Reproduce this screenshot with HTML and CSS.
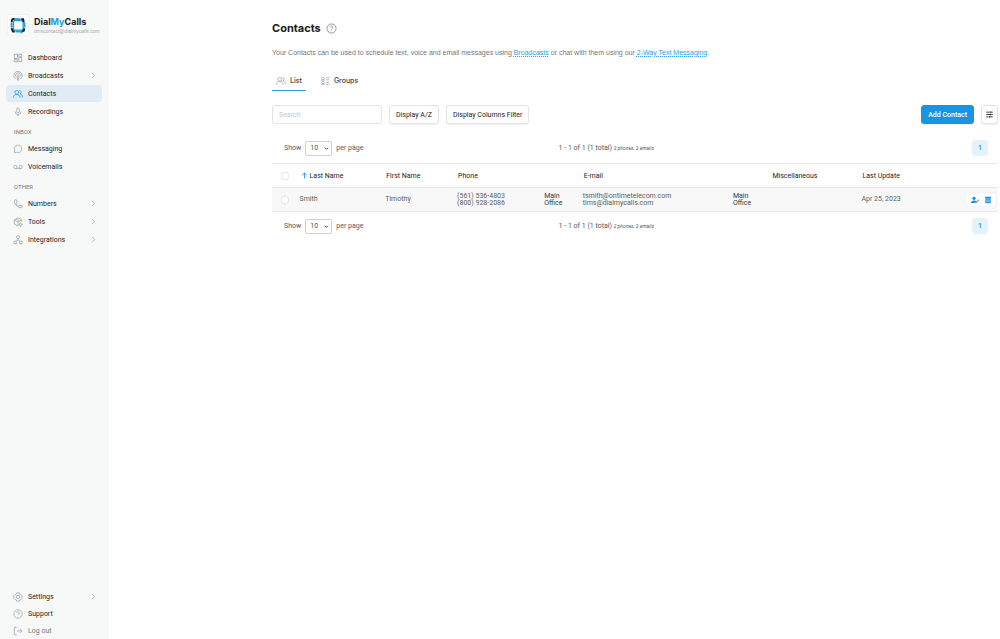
FILE: index.html
```html
<!DOCTYPE html>
<html lang="en">
<head>
<meta charset="utf-8">
<title>Contacts - DialMyCalls</title>
<link rel="stylesheet" href="styles.css">
</head>
<body>
<svg class="defs" aria-hidden="true">
  <symbol id="i-dash" viewBox="0 0 24 24"><rect x="3" y="3" width="8" height="10"/><rect x="3" y="16" width="8" height="5"/><rect x="14" y="11" width="7" height="10"/><rect x="14" y="3" width="7" height="5"/></symbol>
  <symbol id="i-cast" viewBox="0 0 24 24"><path d="M6 19a10 10 0 1 1 12 0M8 15a6 6 0 1 1 8 0"/><circle cx="12" cy="11" r="2"/><path d="M10 16h4l-1 6h-2z"/></symbol>
  <symbol id="i-users" viewBox="0 0 24 24"><circle cx="9" cy="8" r="4.500"/><path d="M1 21c0-5 3-8 8-8s8 3 8 8M15 3.500a4.500 4.500 0 0 1 2 8.500c3 1 5.500 3.500 6 8"/></symbol>
  <symbol id="i-mic" viewBox="0 0 24 24"><rect x="9" y="2" width="6" height="12" rx="3"/><path d="M5 11a7 7 0 0 0 14 0M12 18v4"/></symbol>
  <symbol id="i-chat" viewBox="0 0 24 24"><path d="M3 21l1-5a9 9 0 1 1 4 4z"/></symbol>
  <symbol id="i-vm" viewBox="0 0 24 24"><circle cx="5.500" cy="12" r="4"/><circle cx="18.500" cy="12" r="4"/><path d="M5.500 16h13"/></symbol>
  <symbol id="i-phone" viewBox="0 0 24 24"><path d="M3 4c0-1 1-2 2-2h3l2 6-3 2c1 3 4 6 7 7l2-3 6 2v3c0 1-1 2-2 2C11 21 3 13 3 4z"/></symbol>
  <symbol id="i-tools" viewBox="0 0 24 24"><path d="M21 11V7l-9-5-9 5v10l9 5M3 7l9 5 9-5M12 12v10M7 4.500l9 5"/><circle cx="18" cy="18" r="3"/><path d="M18 13v2M18 21v2M13 18h2M21 18h2"/></symbol>
  <symbol id="i-int" viewBox="0 0 24 24"><circle cx="12" cy="5" r="3.500"/><circle cx="5" cy="18" r="3.500"/><circle cx="19" cy="18" r="3.500"/><path d="M12 8v4M7 15l5-3 5 3"/></symbol>
  <symbol id="i-gear" viewBox="0 0 24 24"><path d="M9 2h6l1 3 3 1 3 3v6l-3 3-3 1-1 3H9l-1-3-3-1-3-3V9l3-3 3-1z"/><circle cx="12" cy="12" r="4"/></symbol>
  <symbol id="i-help" viewBox="0 0 24 24"><circle cx="12" cy="12" r="10"/><path d="M9 9.500a3 3 0 1 1 4.500 2.500c-1 .6-1.500 1-1.500 2M12 16.500v1"/></symbol>
  <symbol id="i-out" viewBox="0 0 24 24"><path d="M9 3H3v18h6M10 12h12M17 7l5 5-5 5"/></symbol>
  <symbol id="i-groups" viewBox="0 0 24 24"><circle cx="7" cy="6" r="3"/><circle cx="7" cy="16" r="3"/><path d="M2 11c1-2 9-2 10 0M2 21c1-2 9-2 10 0M15 4h7M15 9h7M15 15h7M15 20h7"/></symbol>
  <symbol id="i-chev" viewBox="0 0 24 24"><path d="M7 3l9 9-9 9"/></symbol>
  <symbol id="i-down" viewBox="0 0 24 24"><path d="M4 8l8 8 8-8"/></symbol>
  <symbol id="i-up" viewBox="0 0 24 24"><path d="M12 22V3M4 11l8-8 8 8"/></symbol>
</svg>
<div class="app">
  <aside class="sidebar">
    <div class="brand">
      <span class="logo"><svg viewBox="0 0 28 28"><g fill="none" stroke-width="3"><rect x="7" y="7" width="15" height="15" rx="2" stroke="#1c9be6" stroke-width="2"/><path d="M9 4L5 5 4 10M23 10l-1-5h-3M4 19l2 5 3 0M20 24l3-1 1-4" stroke="#17202a"/><path d="M9 5h9M4 11v7M24 10v8M10 24h9l1 3" stroke="#1c9be6"/></g></svg></span>
      <div>
        <div class="brand-name">Dial<span>My</span>Calls</div>
        <div class="brand-mail">timscontact@dialmycalls.com</div>
      </div>
    </div>
    <nav class="nav">
      <a class="item" href="#"><svg class="icon"><use href="#i-dash"/></svg>Dashboard</a>
      <a class="item" href="#"><svg class="icon"><use href="#i-cast"/></svg>Broadcasts<svg class="chev"><use href="#i-chev"/></svg></a>
      <a class="item active" href="#" aria-current="page"><svg class="icon"><use href="#i-users"/></svg>Contacts</a>
      <a class="item" href="#"><svg class="icon"><use href="#i-mic"/></svg>Recordings</a>
      <h2 class="group">INBOX</h2>
      <a class="item" href="#"><svg class="icon"><use href="#i-chat"/></svg>Messaging</a>
      <a class="item" href="#"><svg class="icon"><use href="#i-vm"/></svg>Voicemails</a>
      <h2 class="group">OTHER</h2>
      <a class="item" href="#"><svg class="icon"><use href="#i-phone"/></svg>Numbers<svg class="chev"><use href="#i-chev"/></svg></a>
      <a class="item" href="#"><svg class="icon"><use href="#i-tools"/></svg>Tools<svg class="chev"><use href="#i-chev"/></svg></a>
      <a class="item" href="#"><svg class="icon"><use href="#i-int"/></svg>Integrations<svg class="chev"><use href="#i-chev"/></svg></a>
    </nav>
    <nav class="nav nav-foot">
      <a class="item" href="#"><svg class="icon"><use href="#i-gear"/></svg>Settings<svg class="chev"><use href="#i-chev"/></svg></a>
      <a class="item" href="#"><svg class="icon"><use href="#i-help"/></svg>Support</a>
      <a class="item muted" href="#"><svg class="icon"><use href="#i-out"/></svg>Log out</a>
    </nav>
  </aside>
  <main class="main">
    <h1 class="title">Contacts <svg class="help"><use href="#i-help"/></svg></h1>
    <p class="intro">Your Contacts can be used to schedule text, voice and email messages using <a href="#">Broadcasts</a> or chat with them using our <a href="#">2-Way Text Messaging</a>.</p>
    <div class="tabs">
      <a class="tab selected" href="#"><svg class="icon"><use href="#i-users"/></svg>List</a>
      <a class="tab" href="#"><svg class="icon"><use href="#i-groups"/></svg>Groups</a>
    </div>
    <div class="toolbar">
      <input class="search" type="text" placeholder="Search" aria-label="Search">
      <button class="btn" type="button">Display A/Z</button>
      <button class="btn" type="button">Display Columns Filter</button>
      <button class="btn primary" type="button">Add Contact</button>
      <button class="btn square" type="button" aria-label="View options"><svg viewBox="0 0 24 24"><path d="M1 4h9M14 4h9M1 12h14M18 12h5M1 20h6M11 20h12M14 1v6M16 9v6M11 17v6"/></svg></button>
    </div>
    <div class="pager">
      <label class="per">Show <span class="pick"><select><option>10</option></select><svg><use href="#i-down"/></svg></span> per page</label>
      <div class="count">1 - 1 of 1 (1 total) <em>2 phones, 2 emails</em></div>
      <button class="page" type="button">1</button>
    </div>
    <table class="contacts">
      <colgroup><col class="c-check"><col class="c-last"><col class="c-first"><col class="c-phone"><col class="c-label"><col class="c-mail"><col class="c-label"><col class="c-misc"><col class="c-date"><col class="c-act"></colgroup>
      <thead>
        <tr><th class="check"><input type="checkbox" aria-label="Select all"></th><th><svg class="up"><use href="#i-up"/></svg>Last Name</th><th>First Name</th><th>Phone</th><th></th><th>E-mail</th><th></th><th>Miscellaneous</th><th>Last Update</th><th></th></tr>
      </thead>
      <tbody>
        <tr><td class="check"><input type="checkbox" aria-label="Select Smith"></td><td>Smith</td><td>Timothy</td><td>(561) 536-4803<br>(800) 928-2086</td><td class="dark">Main<br>Office</td><td>tsmith@ontimetelecom.com<br>tims@dialmycalls.com</td><td class="dark">Main<br>Office</td><td></td><td>Apr 25, 2023</td>
        <td><div class="actions"><button type="button" aria-label="Edit"><svg viewBox="0 0 24 24"><circle cx="9" cy="7" r="5"/><path d="M0 21c0-9 15-9 16-4l-4 4zM15 18l7-8 2 2-7 8-3 1z"/></svg></button><button type="button" aria-label="Delete"><svg viewBox="0 0 24 24"><path fill-rule="evenodd" d="M3 2h18v4H3zM4 7h16v15H4zM8 10v9h2v-9zM14 10v9h2v-9z"/></svg></button></div></td></tr>
      </tbody>
    </table>
    <div class="pager">
      <label class="per">Show <span class="pick"><select><option>10</option></select><svg><use href="#i-down"/></svg></span> per page</label>
      <div class="count">1 - 1 of 1 (1 total) <em>2 phones, 2 emails</em></div>
      <button class="page" type="button">1</button>
    </div>
  </main>
</div>
</body>
</html>
```
FILE: styles.css
```css
* { box-sizing: border-box; }
body { margin: 0; background: #fff; color: #333; font: 7px/8px Roboto, "Liberation Sans", sans-serif; }
button, input, select { font: inherit; color: inherit; }
svg { fill: none; stroke: currentColor; stroke-width: 2; flex: none; }
.defs { position: absolute; width: 0; height: 0; }
.app { display: flex; min-height: 100vh; }

.sidebar { width: 109px; flex: none; display: flex; flex-direction: column; padding: 14px 7px 0 6px; background: #f7f8f8; }
.brand { display: flex; align-items: center; gap: 5px; margin: 0 0 13px 1px; }
.logo { display: flex; align-items: center; justify-content: center; width: 22px; height: 22px; background: #fff; border: 1px solid #f0f1f2; border-radius: 3px; }
.brand .logo { flex: none; }
.logo svg { width: 18px; height: 18px; }
.brand-name { font-family: Inter, sans-serif; font-size: 9px; line-height: 12px; font-weight: 700; color: #1c1e21; }
.brand-name span { color: #1c9be6; }
.brand-mail { font-family: "Liberation Sans", sans-serif; font-size: 5px; line-height: 7px; color: #a3a7ab; white-space: nowrap; }
.nav { display: flex; flex-direction: column; gap: 1px; }
.nav-foot { gap: 0; margin-top: auto; }
.item { display: flex; align-items: center; height: 17px; gap: 5px; padding: 0 5px 0 7px; border-radius: 4px; color: #1f2225; text-decoration: none; }
.icon { width: 10px; height: 10px; color: #a5a9ad; }
.item.active { background: #e0ebf3; }
.active .icon { color: #2a9de6; }
.item.muted { color: #777b7f; }
.chev { width: 7px; height: 7px; margin-left: auto; color: #8d9195; }
.group { margin: 7px 0 3px 8px; font-size: 6px; line-height: 8px; font-weight: 400; color: #74787c; }

.main { flex: 1; min-width: 0; padding: 21px 2px 0 163px; }
.title { display: flex; align-items: center; gap: 5px; margin: 0; font: 700 11px/14px Inter, sans-serif; color: #17191b; }
.help { width: 11px; height: 11px; color: #8e9296; }
.intro { margin: 14px 0 16px; font-family: "Liberation Sans", sans-serif; color: #74777a; }
.intro a { color: #2a9de6; text-decoration: underline dotted; text-underline-offset: 1px; }
.tabs { display: flex; gap: 10px; }
.tab { display: flex; align-items: center; gap: 4px; height: 18px; padding: 0 4px 1px; font-family: Inter, sans-serif; font-weight: 500; color: #3a3d40; text-decoration: none; border-bottom: 1px solid transparent; }
.tab.selected { border-color: #2a9de6; }
.toolbar { display: flex; gap: 7px; margin-top: 14px; }
.search, .btn { height: 19px; border: 1px solid #e2e3e5; border-radius: 3px; background: #fff; }
.search { width: 110px; padding: 0 6px; }
.search::placeholder { color: #c4c7ca; }
.btn { padding: 0 6px; color: #1f2225; box-shadow: 0 1px 1px #f0f0f0; }
.btn.primary { margin-left: auto; background: #1a94e1; border-color: #1a94e1; color: #fff; font-weight: 500; }
.btn.square { display: flex; align-items: center; justify-content: center; width: 17px; padding: 0; }
.square svg { width: 7px; height: 7px; stroke-width: 3; }

.pager { display: grid; grid-template-columns: 39% 1fr auto; align-items: center; height: 28px; padding: 0 10px 0 12px; color: #55585b; }
.toolbar + .pager { margin: 10px 0 1px; }
.per { display: flex; align-items: center; gap: 4px; }
.pick { display: flex; align-items: center; position: relative; }
.pick select { appearance: none; width: 27px; height: 15px; padding: 0 4px; border: 1px solid #cfd1d3; border-radius: 2px; background: #fff; }
.pick svg { position: absolute; right: 3px; width: 5px; height: 5px; color: #222; stroke-width: 4; pointer-events: none; }
.count { white-space: nowrap; }
.count em { font-size: 5px; }
.page { width: 16px; height: 16px; padding: 0; border: 0; border-radius: 3px; background: #e6f2fa; color: #1a8fdd; font-weight: 500; }

.contacts { width: 100%; table-layout: fixed; border-collapse: collapse; border-top: 1px solid #e9eaeb; }
.contacts th, .contacts td { height: 24px; padding: 0; text-align: left; vertical-align: middle; white-space: nowrap; }
.contacts th { font-weight: 400; color: #1f2225; padding-left: 1px; }
.contacts td { line-height: 7px; color: #5c5f62; }
.contacts td.dark { color: #34373a; }
.contacts tbody tr { background: #f8f8f8; border: solid #e6e7e8; border-width: 1px 0; }
.c-check { width: 3.8%; }
.c-last { width: 11.8%; }
.c-first { width: 9.9%; }
.c-phone { width: 12%; }
.c-label { width: 5.3%; }
.c-mail { width: 20.7%; }
.c-misc { width: 12.4%; }
.c-date { width: 13%; }
.contacts .check { padding-left: 9px; }
.check input { appearance: none; display: block; width: 8px; height: 8px; margin: 0; border: 1px solid #e4e6e8; border-radius: 3px; background: #fff; }
.up { width: 7px; height: 7px; margin-right: 2px; color: #1a94e1; stroke-width: 3; vertical-align: -1px; }
.actions { display: flex; justify-content: center; gap: 5px; width: 30px; height: 13px; margin: 0 2px 0 auto; background: #fff; border-radius: 2px; box-shadow: 0 0 1px #ccc; }
.actions button { display: flex; align-items: center; padding: 0; border: 0; background: none; color: #1a8fdd; }
.actions svg { width: 8px; height: 8px; fill: currentColor; stroke: none; }
```
